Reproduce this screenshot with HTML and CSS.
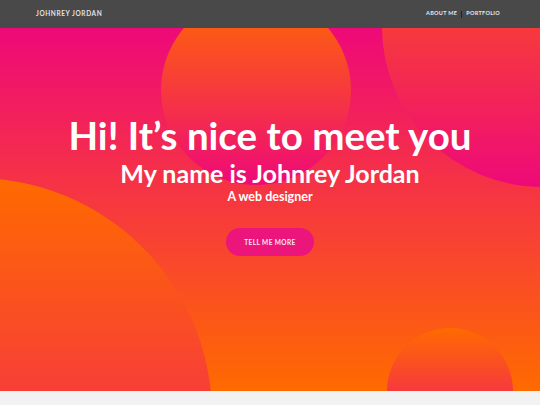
FILE: index.html
```html
<!DOCTYPE html>
<html lang="en">
<head>
<meta charset="utf-8">
<title>Johnrey Jordan</title>
<link rel="stylesheet" href="styles.css">
</head>
<body>
  <nav class="navbar">
    <a class="brand" href="#">Johnrey Jordan</a>
    <ul class="nav-links">
      <li><a href="#about">About me</a></li>
      <li class="divider"></li>
      <li><a href="#portfolio">Portfolio</a></li>
    </ul>
  </nav>

  <header class="hero">
    <div class="bubble bubble-top"></div>
    <div class="bubble bubble-corner"></div>
    <div class="bubble bubble-left"></div>
    <div class="bubble bubble-bottom"></div>

    <div class="hero-content">
      <h1 class="hero-title">Hi! It’s nice to meet you</h1>
      <h2 class="hero-name">My name is Johnrey Jordan</h2>
      <p class="hero-role">A web designer</p>
      <a class="btn-more" href="#about">Tell me more</a>
    </div>
  </header>

  <section class="page-rest"></section>
</body>
</html>
```

FILE: styles.css
```css
* {
  box-sizing: border-box;
}

body {
  margin: 0;
  background: #f2f2f2;
  font-family: "Lato", "Open Sans", sans-serif;
}

a {
  text-decoration: none;
}

/* top navigation */
.navbar {
  height: 28px;
  background: #494949;
  display: flex;
  align-items: center;
  justify-content: space-between;
  padding: 0 40px 0 36px;
}

.brand {
  color: #e2e2e2;
  font-size: 6.5px;
  line-height: 1;
  font-weight: 700;
  letter-spacing: 0.6px;
  text-transform: uppercase;
}

.nav-links {
  list-style: none;
  margin: 0;
  padding: 0;
  display: flex;
  align-items: center;
  gap: 4px;
}

.nav-links li {
  display: flex;
  align-items: center;
  line-height: 1;
}

.nav-links a {
  color: #e8e8e8;
  font-size: 5.5px;
  line-height: 1;
  font-weight: 700;
  letter-spacing: 0.3px;
  text-transform: uppercase;
}

.nav-links .divider {
  width: 1px;
  height: 7px;
  background: #222;
}

/* hero */
.hero {
  position: relative;
  height: 363px;
  overflow: hidden;
  background: linear-gradient(#ee0979, #ff6a00);
}

.bubble {
  position: absolute;
  border-radius: 50%;
  background: linear-gradient(#ff6a00, #ee0979);
}

.bubble-top {
  left: 161px;
  top: -33px;
  width: 190px;
  height: 190px;
}

.bubble-corner {
  left: 382px;
  top: -161px;
  width: 320px;
  height: 320px;
}

.bubble-left {
  left: -262px;
  top: 150px;
  width: 474px;
  height: 474px;
}

.bubble-bottom {
  left: 387px;
  top: 300px;
  width: 126px;
  height: 126px;
}

.hero-content {
  position: relative;
  z-index: 1;
  display: flex;
  flex-direction: column;
  align-items: center;
  padding-top: 88px;
  color: #fff;
  text-align: center;
}

.hero-title {
  margin: 0;
  font-size: 38.5px;
  line-height: 1;
  font-weight: 700;
}

.hero-name {
  margin: 6px 0 0;
  font-size: 25px;
  line-height: 1;
  font-weight: 700;
}

.hero-role {
  margin: 5px 0 0;
  font-size: 12.5px;
  line-height: 1;
  font-weight: 700;
}

.btn-more {
  margin-top: 25px;
  width: 88px;
  height: 28px;
  border-radius: 14px;
  background: #ec157c;
  color: #fde6f0;
  font-size: 6.5px;
  font-weight: 700;
  letter-spacing: 0.4px;
  text-transform: uppercase;
  display: flex;
  align-items: center;
  justify-content: center;
}

.page-rest {
  height: 14px;
  background: #f2f2f2;
}
```
